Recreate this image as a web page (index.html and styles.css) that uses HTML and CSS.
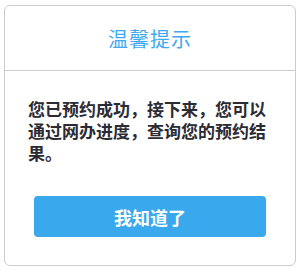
FILE: index.html
```html
<!DOCTYPE html>
<html lang="zh">
<head>
<meta charset="utf-8">
<link rel="stylesheet" href="styles.css">
</head>
<body>
<div class="card">
  <div class="head">温馨提示</div>
  <p class="msg">您已预约成功，接下来，您可以通过网办进度，查询您的预约结果。</p>
  <div class="actions"><button class="btn">我知道了</button></div>
</div>
</body>
</html>
```
FILE: styles.css
```css
html, body { margin: 0; padding: 0; background: #fff; }
body { font-family: "Liberation Sans", "Noto Sans CJK SC", sans-serif; }
.card {
  box-sizing: border-box;
  width: 292px;
  height: 261px;
  margin: 5px 0 0 4px;
  border: 1px solid #cccccc;
  border-radius: 6px;
}
.head {
  height: 64px;
  border-bottom: 1px solid #cccccc;
  display: flex;
  align-items: center;
  justify-content: center;
  font-size: 20px;
  letter-spacing: 1px;
  color: #3ea8f2;
}
.msg {
  margin: 0;
  padding: 29px 23px 0 23px;
  font-size: 17px;
  line-height: 22px;
  font-weight: bold;
  color: #2b2b33;
}
.actions {
  padding: 30px 29px 0 29px;
}
.btn {
  display: block;
  width: 100%;
  height: 41px;
  border: none;
  border-radius: 4px;
  background: #3aa8ec;
  color: #fff;
  font-family: inherit;
  font-size: 18px;
  font-weight: bold;
  padding: 0;
}
```
